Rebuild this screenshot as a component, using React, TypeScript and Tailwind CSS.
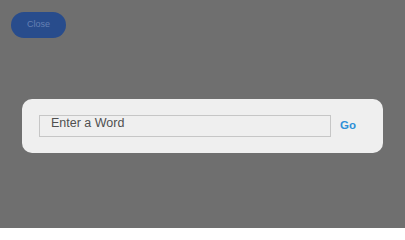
export default function App() {
  return (
    <div className="relative h-[228px] w-[405px] overflow-hidden bg-[#6f6f6f] font-['Liberation_Sans',Arial,sans-serif]">
      <div className="pl-[11px] pt-[12px]">
        <button className="flex h-[26px] w-[55px] items-center justify-center rounded-full bg-[#284c8c] text-[9px] text-[#6580b3]">
          Close
        </button>
      </div>
      <div className="mx-[22px] mt-[61px] flex h-[54px] items-center rounded-[10px] bg-[#efefef] pl-[17px] pr-[27px]">
        <div className="flex h-[22px] w-[292px] items-start border border-[#c6c6c6] bg-[#efefef] pl-[11px]">
          <span className="text-[12.5px] leading-[15px] text-[#4f4f4f]">Enter a Word</span>
        </div>
        <span className="ml-auto text-[11.5px] font-bold text-[#2f8fd8]">Go</span>
      </div>
    </div>
  )
}
